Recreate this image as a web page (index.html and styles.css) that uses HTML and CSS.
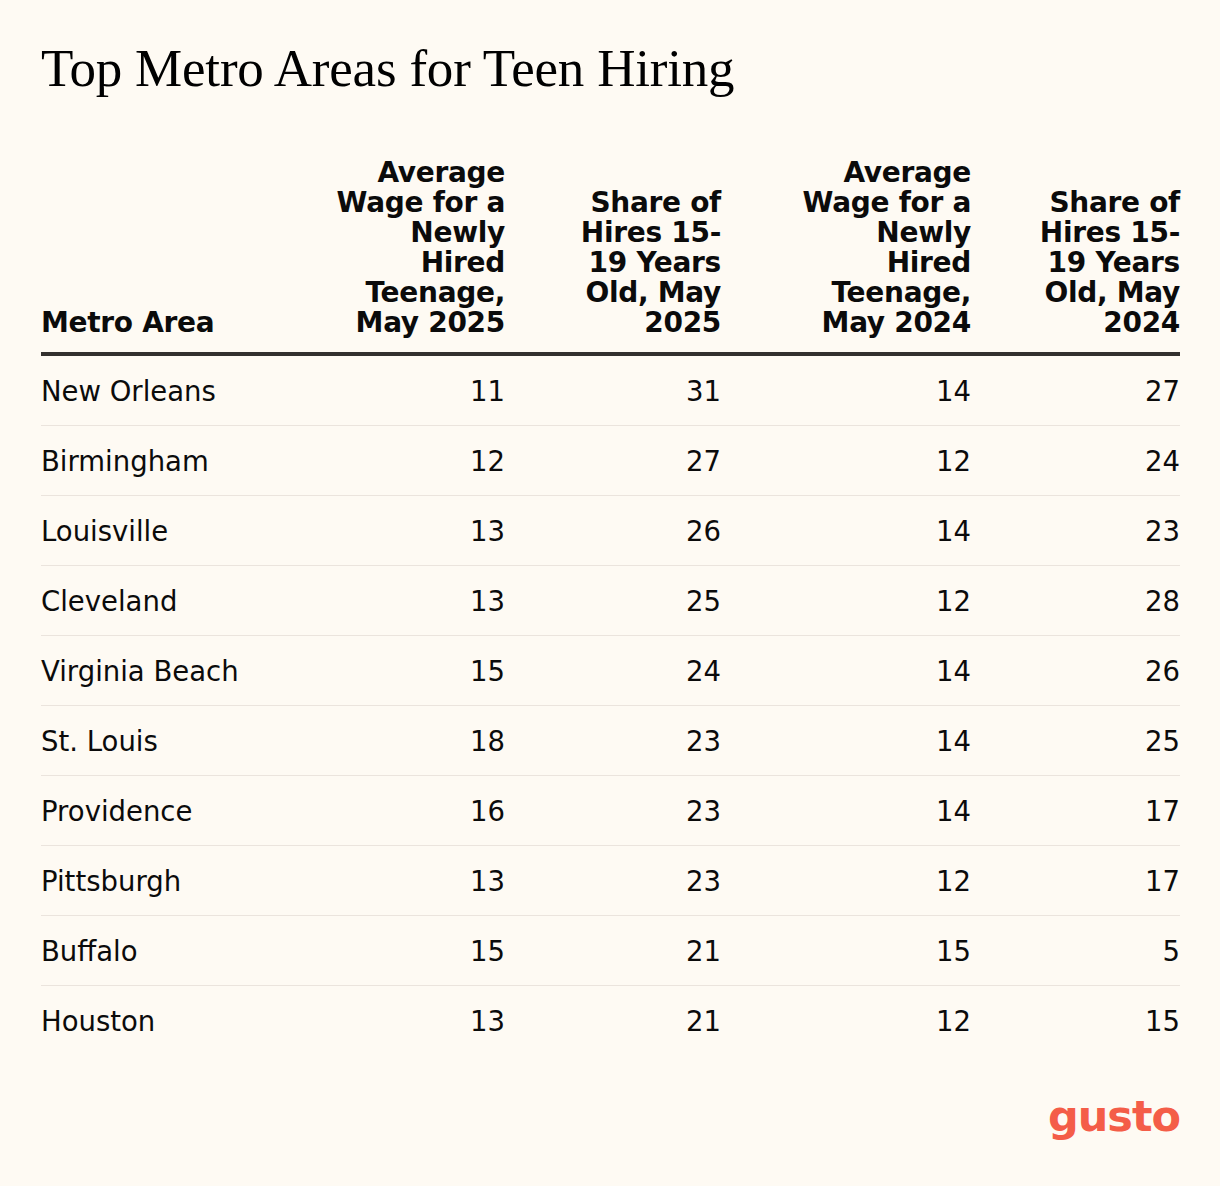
FILE: index.html
```html
<!DOCTYPE html>
<html lang="en">
<head>
<meta charset="utf-8">
<title>Top Metro Areas for Teen Hiring</title>
<link rel="stylesheet" href="styles.css">
</head>
<body>
<main class="page">
  <h1 class="title">Top Metro Areas for Teen Hiring</h1>
  <table class="data">
    <colgroup>
      <col class="c-name"><col class="c-w25"><col class="c-s25"><col class="c-w24"><col class="c-s24">
    </colgroup>
    <thead>
      <tr>
        <th class="name">Metro Area</th>
        <th>Average<br>Wage for a<br>Newly<br>Hired<br>Teenage,<br>May 2025</th>
        <th>Share of<br>Hires 15-<br>19 Years<br>Old, May<br>2025</th>
        <th>Average<br>Wage for a<br>Newly<br>Hired<br>Teenage,<br>May 2024</th>
        <th>Share of<br>Hires 15-<br>19 Years<br>Old, May<br>2024</th>
      </tr>
    </thead>
    <tbody>
      <tr><td class="name">New Orleans</td><td>11</td><td>31</td><td>14</td><td>27</td></tr>
      <tr><td class="name">Birmingham</td><td>12</td><td>27</td><td>12</td><td>24</td></tr>
      <tr><td class="name">Louisville</td><td>13</td><td>26</td><td>14</td><td>23</td></tr>
      <tr><td class="name">Cleveland</td><td>13</td><td>25</td><td>12</td><td>28</td></tr>
      <tr><td class="name">Virginia Beach</td><td>15</td><td>24</td><td>14</td><td>26</td></tr>
      <tr><td class="name">St. Louis</td><td>18</td><td>23</td><td>14</td><td>25</td></tr>
      <tr><td class="name">Providence</td><td>16</td><td>23</td><td>14</td><td>17</td></tr>
      <tr><td class="name">Pittsburgh</td><td>13</td><td>23</td><td>12</td><td>17</td></tr>
      <tr><td class="name">Buffalo</td><td>15</td><td>21</td><td>15</td><td>5</td></tr>
      <tr><td class="name">Houston</td><td>13</td><td>21</td><td>12</td><td>15</td></tr>
    </tbody>
  </table>
  <footer class="footer">
    <span class="logo">gusto</span>
  </footer>
</main>
</body>
</html>
```
FILE: styles.css
```css
html, body {
  margin: 0;
  padding: 0;
  background: #fefaf3;
}
.page {
  box-sizing: border-box;
  width: 1220px;
  height: 1186px;
  padding: 37px 40px 0 41px;
  color: #0b0b0b;
  font-family: "DejaVu Sans", sans-serif;
}
.title {
  margin: 0;
  font-family: "Liberation Serif", serif;
  font-weight: 400;
  font-size: 53px;
  line-height: 62px;
  letter-spacing: -0.2px;
  color: #000;
}
.data {
  margin-top: 59px;
  width: 1139px;
  border-collapse: collapse;
  table-layout: fixed;
}
.c-name { width: 294px; }
.c-w25 { width: 170px; }
.c-s25 { width: 216px; }
.c-w24 { width: 250px; }
.c-s24 { width: 209px; }
.data th {
  text-align: right;
  vertical-align: bottom;
  font-weight: 700;
  font-size: 28px;
  line-height: 30px;
  letter-spacing: -0.3px;
  padding: 0 0 14px 0;
  border-bottom: 4px solid #33302e;
  white-space: nowrap;
}
.data th.name, .data td.name {
  text-align: left;
}
.data td {
  text-align: right;
  height: 69px;
  padding: 0;
  font-size: 27.5px;
  font-weight: 400;
  border-bottom: 1px solid #ebe4dd;
  white-space: nowrap;
}
.data tbody tr:last-child td {
  border-bottom: none;
}
.footer {
  display: flex;
  justify-content: flex-end;
  margin-top: 40px;
}
.logo {
  font-family: "DejaVu Sans", sans-serif;
  font-weight: 700;
  font-size: 43px;
  line-height: 42px;
  color: #f45d48;
  letter-spacing: -1px;
}
```
